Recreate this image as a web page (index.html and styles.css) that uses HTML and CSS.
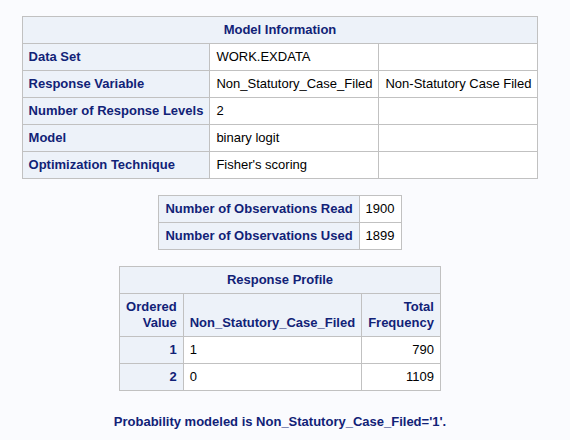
FILE: index.html
```html
<!DOCTYPE html>
<html>
<head>
<meta charset="utf-8">
<link rel="stylesheet" href="styles.css">
</head>
<body>
<div class="page">
  <table class="tbl">
    <thead>
      <tr><th class="caption" colspan="3">Model Information</th></tr>
    </thead>
    <tbody>
      <tr><th class="rowhead">Data Set</th><td>WORK.EXDATA</td><td></td></tr>
      <tr><th class="rowhead">Response Variable</th><td>Non_Statutory_Case_Filed</td><td>Non-Statutory Case Filed</td></tr>
      <tr><th class="rowhead">Number of Response Levels</th><td>2</td><td></td></tr>
      <tr><th class="rowhead">Model</th><td>binary logit</td><td></td></tr>
      <tr><th class="rowhead">Optimization Technique</th><td>Fisher's scoring</td><td></td></tr>
    </tbody>
  </table>

  <table class="tbl">
    <tbody>
      <tr><th class="rowhead">Number of Observations Read</th><td class="num">1900</td></tr>
      <tr><th class="rowhead">Number of Observations Used</th><td class="num">1899</td></tr>
    </tbody>
  </table>

  <table class="tbl">
    <thead>
      <tr><th class="caption" colspan="3">Response Profile</th></tr>
      <tr>
        <th class="colhead right">Ordered<br>Value</th>
        <th class="colhead">Non_Statutory_Case_Filed</th>
        <th class="colhead right">Total<br>Frequency</th>
      </tr>
    </thead>
    <tbody>
      <tr><th class="rowhead right">1</th><td>1</td><td class="num">790</td></tr>
      <tr><th class="rowhead right">2</th><td>0</td><td class="num">1109</td></tr>
    </tbody>
  </table>

  <p class="note">Probability modeled is Non_Statutory_Case_Filed='1'.</p>
</div>
</body>
</html>
```

FILE: styles.css
```css
html, body {
  margin: 0;
  padding: 0;
  background: #fafbfe;
}

body {
  font-family: "Liberation Sans", Arial, sans-serif;
  font-size: 13px;
  color: #000;
}

.page {
  padding: 16px 20px 0 10px;
  display: flex;
  flex-direction: column;
  align-items: center;
  gap: 16px;
}

.tbl {
  border-collapse: collapse;
  border: 1px solid #c1c1c1;
  background: #fff;
}

.tbl th,
.tbl td {
  border: 1px solid #c1c1c1;
  padding: 5px 6px;
  line-height: 16px;
  white-space: nowrap;
  text-align: left;
  vertical-align: top;
}

.tbl th {
  background: #edf2f9;
  color: #112277;
  font-weight: bold;
}

.tbl th.caption {
  text-align: center;
}

.tbl th.colhead {
  vertical-align: bottom;
}

.tbl .right,
.tbl .num {
  text-align: right;
}

.note {
  margin: 7px 0 0;
  font-weight: bold;
  color: #112277;
  line-height: 16px;
}
```
